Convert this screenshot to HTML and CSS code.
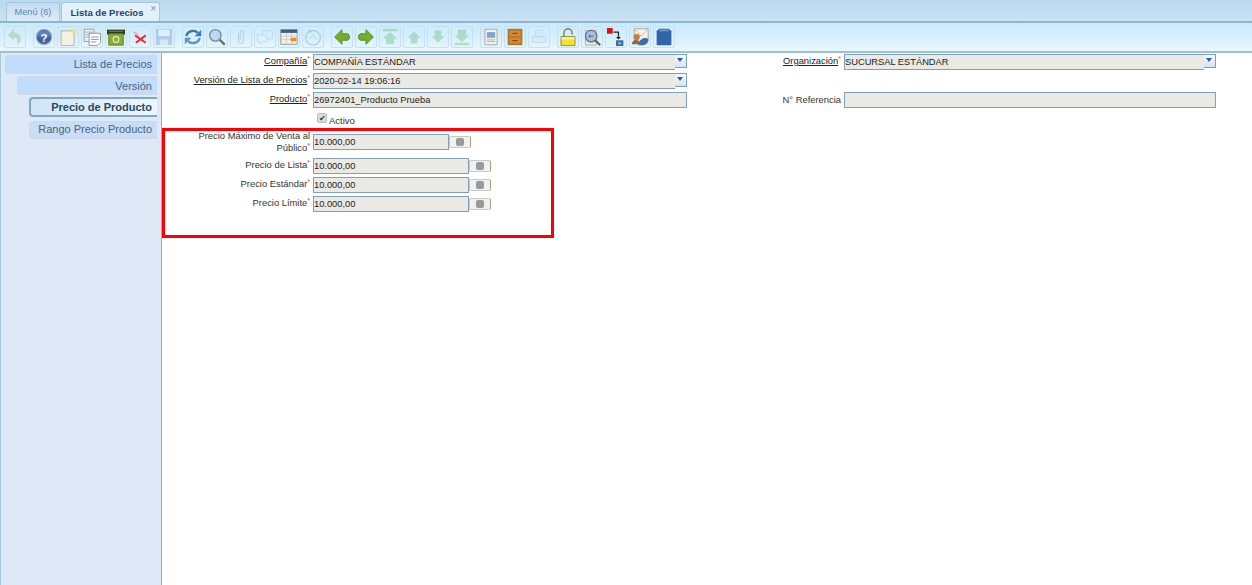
FILE: index.html
```html
<!DOCTYPE html>
<html lang="es">
<head>
<meta charset="utf-8">
<title>Lista de Precios</title>
<link rel="stylesheet" href="styles.css">
</head>
<body>
<div class="app">
  <div class="tabs">
    <div class="tab">Menú (6)</div>
    <div class="tab active">Lista de Precios<span class="close">×</span></div>
  </div>
  <div class="toolbar">
    <div class="group">
      <span class="btn off"><svg viewBox="0 0 22 22"><path d="M9 2 3 9l6 5v-3c4 0 6 2 5 9 5-4 6-13-5-14z" fill="#7cb54a" stroke="#5f9a3a" stroke-width=".7"/></svg></span>
    </div>
    <div class="group">
      <span class="btn"><svg viewBox="0 0 22 22"><circle cx="11" cy="11" r="9.500" fill="#3f63a3" stroke="#a9b5cc" stroke-width="1.400"/><path d="M3 10a8 7 0 0 1 16 0z" fill="#7b97c6" opacity=".6"/><text x="11" y="16.500" class="q">?</text></svg></span>
      <span class="btn"><svg viewBox="0 0 22 22"><path d="M2.500 3.500h16v18h-16z" fill="#f3f1e6" stroke="#a8a8a0"/><circle cx="18" cy="4" r="3" fill="#f3e26a"/></svg></span>
      <span class="btn"><svg viewBox="0 0 22 22"><path d="M1.500 1.500h12v15h-12z" fill="#eef0f3" stroke="#8d949c"/><path d="M3 5h9M3 8h9M3 11h9" stroke="#9aa3ad"/><path d="M7.500 6.500h14v11l-4 4h-10z" fill="#fafafa" stroke="#7f8790"/><path d="M10 11h9M10 14h9M10 17h6" stroke="#7f8790"/></svg></span>
      <span class="btn"><svg viewBox="0 0 22 22"><path d="M0 2h22v6H0z" fill="#2f3b22"/><path d="M2 7h18v14H2z" fill="#8bab35" stroke="#5d7a22"/><path d="M2 4h18" stroke="#7e9c45"/><circle cx="11" cy="14" r="3.500" fill="none" stroke="#e4efbb" stroke-width="1.400"/></svg></span>
      <span class="btn"><svg viewBox="0 0 22 22"><path d="M5 9l13 9M18 9 6 18" stroke="#ea2b2b" stroke-width="2.400"/><path d="M3 5l6 4" stroke="#f0a8b0" stroke-width="2.200"/></svg></span>
      <span class="btn off"><svg viewBox="0 0 22 22"><path d="M1 1h20v20H1z" fill="#5d88b8"/><path d="M4 2h14v8H4z" fill="#eef2f7"/><path d="M6 14h10v7H6z" fill="#c4d3e3"/></svg></span>
    </div>
    <div class="group">
      <span class="btn"><svg viewBox="0 0 22 22"><path d="M3 10a8 7 0 0 1 14-4" fill="none" stroke="#3c78ad" stroke-width="3"/><path d="M21 2v8h-8z" fill="#3c78ad"/><path d="M19 12a8 7 0 0 1-14 4" fill="none" stroke="#5f93c2" stroke-width="3"/><path d="M1 20v-8h8z" fill="#5f93c2"/></svg></span>
      <span class="btn"><svg viewBox="0 0 22 22"><circle cx="9" cy="9" r="7" fill="#bcd8f2" stroke="#7b8894" stroke-width="1.600"/><path d="M14.500 14.500l6 6" stroke="#6d6a60" stroke-width="2.800"/></svg></span>
      <span class="btn off"><svg viewBox="0 0 22 22"><path d="M8 6v10a3 3 0 0 0 6 0V5a2 2 0 0 0-4 0v10" fill="none" stroke="#6e97bd" stroke-width="1.300"/></svg></span>
      <span class="btn off"><svg viewBox="0 0 22 22"><path d="M8 3.500h12v9h-3v3l-3-3H8z" fill="#e8f1f8" stroke="#7ea0bf"/><path d="M2 8.500h11v8H8l-3 3v-3H2z" fill="#eef5fa" stroke="#7ea0bf"/></svg></span>
      <span class="btn"><svg viewBox="0 0 22 22"><path d="M1 2h20v18H1z" fill="#f3efe3" stroke="#8a8f94"/><path d="M1 2h20v4H1z" fill="#3c5f8c"/><path d="M1 10h20M1 14h20M8 6v14M14 6v14" stroke="#b9bdc0" stroke-width=".7"/><path d="M13 12h7v4h-7z" fill="#ea8a25"/></svg></span>
      <span class="btn off"><svg viewBox="0 0 22 22"><circle cx="11" cy="12" r="9" fill="#d9ecf8" stroke="#4b86b5" stroke-width="1.500"/><path d="M7 13l4-4 4 4" fill="none" stroke="#4b86b5"/><path d="M3 7l3-5 4 3z" fill="#5da05a"/></svg></span>
    </div>
    <div class="group">
      <span class="btn"><svg viewBox="0 0 22 22"><path d="M2 11l9-9v5h7l2 2v4l-2 2h-7v5z" fill="#74ae24" stroke="#4b7f2a"/></svg></span>
      <span class="btn"><svg viewBox="0 0 22 22"><path d="M20 11l-9-9v5H4L2 9v4l2 2h7v5z" fill="#74ae24" stroke="#4b7f2a"/></svg></span>
      <span class="btn off"><svg viewBox="0 0 22 22"><path d="M2 1h18v3H2zM11 5l9 8h-4v7H6v-7H2z" fill="#55b062"/></svg></span>
      <span class="btn off"><svg viewBox="0 0 22 22"><path d="M11 4l8 8h-4v7H7v-7H3z" fill="#55b062"/></svg></span>
      <span class="btn off"><svg viewBox="0 0 22 22"><path d="M11 18l8-8h-4V3H7v7H3z" fill="#55b062"/></svg></span>
      <span class="btn off"><svg viewBox="0 0 22 22"><path d="M2 18h18v3H2zM11 17l9-8h-4V2H6v7H2z" fill="#55b062"/></svg></span>
    </div>
    <div class="group">
      <span class="btn"><svg viewBox="0 0 22 22"><path d="M3.500 1.500h15v19h-15z" fill="#f1f1ed" stroke="#9a9a96"/><path d="M6 5h10v7H6z" fill="#7ea6cf"/><path d="M6 14.500h10M6 16.500h10" stroke="#a5a5a5"/></svg></span>
      <span class="btn"><svg viewBox="0 0 22 22"><path d="M2 1h18v20H2z" fill="#9c7a3a"/><path d="M4 3h14v7H4zM4 12h14v7H4z" fill="#e0862a"/><path d="M8 6.500h6M8 15.500h6" stroke="#5e3d12" stroke-width="1.200"/></svg></span>
      <span class="btn off"><svg viewBox="0 0 22 22"><path d="M7 3h8v7H7z" fill="#eef5fa" stroke="#7ea0bf"/><path d="M2.500 10.500h17v7h-17z" fill="#d4e3ef" stroke="#7ea0bf"/><path d="M9 7l2-2 2 2" stroke="#7ea0bf" fill="none"/></svg></span>
    </div>
    <div class="group">
      <span class="btn"><svg viewBox="0 0 22 22"><path d="M6 11V6a5 5 0 0 1 10 0v2" fill="none" stroke="#8b8b86" stroke-width="2"/><path d="M2.500 10.500h17v11h-17z" fill="#f1e234" stroke="#857c1c"/><path d="M3 11h16v3H3z" fill="#f9f19a"/></svg></span>
      <span class="btn"><svg viewBox="0 0 22 22"><path d="M3 3h13v18H3z" fill="#e9e9e4" stroke="#a5a5a0"/><circle cx="10" cy="10" r="7" fill="#a9c2da" stroke="#66727d" stroke-width="1.500"/><path d="M7 10h6M7 10l2-2M7 10l2 2" stroke="#34598a" fill="none"/><path d="M15 15l6 6" stroke="#66625a" stroke-width="2.600"/></svg></span>
      <span class="btn"><svg viewBox="0 0 22 22"><path d="M0 0h7v7H0z" fill="#d8121c"/><path d="M8 5h6v8" fill="none" stroke="#222" stroke-width="1.500"/><path d="M11 11h6l-3 3z" fill="#222"/><path d="M11 15h9v7h-9z" fill="#3b6ea8"/><path d="M14 17.500h3v2.500h-3z" fill="#a9c6e3"/></svg></span>
      <span class="btn"><svg viewBox="0 0 22 22"><path d="M4 1h17v15H4z" fill="#f6f3ec" stroke="#9a9a9a"/><path d="M4 1l8.500 9L21 1" fill="none" stroke="#b5b0a8"/><circle cx="7" cy="11" r="3.800" fill="#c77d2e"/><path d="M1 20c0-7 10-7 10 0z" fill="#8c6a3a"/><path d="M9 21c1-8 7-10 12-8 1 6-4 9-12 8z" fill="#3d6cab"/></svg></span>
      <span class="btn"><svg viewBox="0 0 22 22"><path d="M2 4l3-3h12l3 3v16l-1 1H3l-1-1z" fill="#2f66a6"/><path d="M5 2h12v2H5z" fill="#6c9ad0"/></svg></span>
    </div>
  </div>
  <div class="main">
    <nav class="side">
      <a class="step l0">Lista de Precios</a>
      <a class="step l1">Versión</a>
      <a class="step l2 current">Precio de Producto</a>
      <a class="step l2 last">Rango Precio Producto</a>
    </nav>
    <section class="content">
      <form class="form">
        <label class="lbl"><u>Compañía</u><sup>*</sup></label>
        <div class="combo"><span class="field">COMPAÑÍA ESTÁNDAR</span><span class="arrow"></span></div>
        <label class="lbl"><u>Organización</u><sup>*</sup></label>
        <div class="combo"><span class="field">SUCURSAL ESTÁNDAR</span><span class="arrow"></span></div>

        <label class="lbl"><u>Versión de Lista de Precios</u><sup>*</sup></label>
        <div class="combo"><span class="field">2020-02-14 19:06:16</span><span class="arrow"></span></div>
        <span></span><span></span>

        <label class="lbl"><u>Producto</u><sup>*</sup></label>
        <span class="field">26972401_Producto Prueba</span>
        <label class="lbl plain">N° Referencia</label>
        <span class="field"></span>

        <span></span>
        <label class="check"><span class="box">✔</span>Activo</label>
        <span></span><span></span>

        <label class="lbl two">Precio Máximo de Venta al Público<sup>*</sup></label>
        <div class="money short"><span class="field">10.000,00</span><span class="calc"><i></i></span></div>
        <span></span><span></span>

        <label class="lbl">Precio de Lista<sup>*</sup></label>
        <div class="money"><span class="field">10.000,00</span><span class="calc"><i></i></span></div>
        <span></span><span></span>

        <label class="lbl">Precio Estándar<sup>*</sup></label>
        <div class="money"><span class="field">10.000,00</span><span class="calc"><i></i></span></div>
        <span></span><span></span>

        <label class="lbl">Precio Límite<sup>*</sup></label>
        <div class="money"><span class="field">10.000,00</span><span class="calc"><i></i></span></div>
        <span></span><span></span>
      </form>
      <div class="mark"></div>
    </section>
  </div>
</div>
</body>
</html>
```
FILE: styles.css
```css
* { box-sizing: border-box; }
html, body { margin: 0; height: 100%; overflow: hidden; }
body { background: #fff; font-family: "Liberation Sans", Arial, sans-serif; color: #333; }
.app { width: 1252px; height: 585px; display: flex; flex-direction: column; }

.tabs {
  height: 21px; display: flex; align-items: flex-end; gap: 1px; padding-left: 6px;
  background: linear-gradient(#b9d9ee, #c9e1f4);
}
.tab {
  height: 19px; width: 54px; text-align: center; font-size: 9.200px; line-height: 19px; color: #5a88b6;
  background: linear-gradient(#c4dcf0, #dcebf8);
  border: 1px solid #a4c6de; border-bottom: 0; border-radius: 3px 3px 0 0;
}
.tab.active {
  position: relative; width: 99px; padding-right: 7px; font-weight: bold; color: #21456f; background: #e3f1fc; font-size: 9.500px;
}
.close { position: absolute; right: 3px; top: -1px; font-size: 10px; line-height: 14px; font-weight: normal; color: #6a94ba; }

.toolbar {
  height: 32px; display: flex; gap: 7px; padding: 3px 0 0 4px;
  border-top: 2px solid #8fb4d0;
  border-bottom: 2px solid #9cc0d6;
  background: linear-gradient(#c8ecfb, #d5effc 50%, #eaf8fe);
}
.group { display: flex; gap: 2px; }
.btn {
  width: 22px; height: 22px; padding: 1px; display: block;
  border: 1px solid #c9dff0; border-radius: 2px;
}
.btn svg { display: block; width: 18px; height: 18px; }
.btn.off svg { opacity: .32; }
.q { font: bold 14px "Liberation Sans", sans-serif; fill: #fff; text-anchor: middle; }

.main { flex: 1; display: flex; min-height: 0; }
.side {
  width: 162px; flex: none; padding-top: 2px;
  display: flex; flex-direction: column; gap: 2px; align-items: flex-end;
  background: #dfe8f6; border-right: 1px solid #8fb1cc; border-left: 1px solid #a9c6dc;
}
.step {
  display: block; height: 19px; margin-right: 4px; padding-right: 5px;
  text-align: right; font-size: 11px; line-height: 17px; color: #4a6480;
  background: #c2dcfb; border: 1px solid #cfd8e4; border-right: 0; border-radius: 4px 0 0 4px;
}
.l0 { width: 152px; }
.l1 { width: 140px; line-height: 18px; }
.l2 { width: 128px; background: #c9def6; }
.current {
  height: 20px; line-height: 16px; font-weight: bold; color: #2b4660;
  background: linear-gradient(90deg, #cfe6f6, #eef6fc); border: 2px solid #7ea9c6; border-right: 0;
}
.last { height: 18px; margin-top: 2px; line-height: 14px; }

.content { position: relative; flex: 1; min-width: 0; }
.form {
  padding-top: 1px;
  display: grid; grid-template-columns: 151px 374px 157px 372px;
  grid-template-rows: 16px 16px 16px 20px 21px 16px 16px 16px; row-gap: 3px;
}
.lbl { padding-right: 3px; text-align: right; font-size: 9.400px; line-height: 14px; color: #333; }
.lbl u { color: #222; }
.lbl sup { color: #e33; font-size: 7px; line-height: 0; vertical-align: 3px; }
.plain { line-height: 15px; }
.two { margin-top: -4px; line-height: 12px; padding-left: 6px; }

.field {
  display: block; height: 16px; flex: 1; min-width: 0; padding-left: 0;
  font-size: 9.300px; line-height: 14px; color: #222; white-space: nowrap;
  background: #ebe9e3; border: 1px solid #7f9fbd;
}
.combo { display: flex; align-items: flex-start; }
.combo .field { border-right: 0; }
.arrow {
  position: relative; width: 12px; height: 14px; flex: none;
  background: linear-gradient(#f3f8fc, #d5e6f3); border: 1px solid #7f9fbd; border-left: 0;
}
.arrow::after {
  content: ""; position: absolute; left: 2px; top: 3px;
  border: 3px solid transparent; border-top: 4px solid #2f5f8e; border-bottom: 0;
}
.check { display: flex; align-items: center; height: 16px; margin-top: 1px; font-size: 9.500px; color: #333; }
.box {
  width: 10px; height: 10px; margin: -4px 2px 0 4px; font-size: 8px; line-height: 10px; text-align: center;
  color: #333; background: #dcdcdc; border: 1px solid #bbb; border-radius: 2px;
}
.money { display: flex; align-items: flex-start; }
.money .field { flex: 0 0 156px; }
.money.short .field { flex-basis: 136px; }
.calc {
  display: flex; align-items: center; justify-content: center; width: 22px; height: 12px; margin-top: 2px; flex: none;
  background: #f1f1ee; border: 1px solid #c8c8c4; border-right-color: #a89f7c; border-radius: 2px;
}
.calc i { width: 8px; height: 8px; background: #979a9d; border-radius: 2px; }

.mark { position: absolute; left: 0; top: 75px; width: 392px; height: 110px; border: 3px solid #f00; }
```
